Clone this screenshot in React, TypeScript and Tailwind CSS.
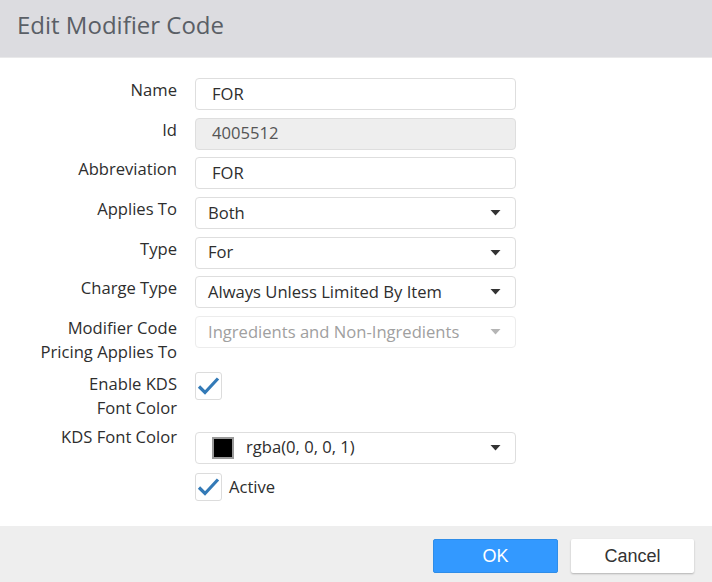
import React from "react";

const font = { fontFamily: '"Open Sans", "Noto Sans", sans-serif' };

function Arrow({ disabled }: { disabled?: boolean }) {
  return (
    <svg width="11" height="6" viewBox="0 0 11 6" className="shrink-0">
      <path d="M0.5 0 L10.5 0 L5.5 5.5 Z" fill={disabled ? "#b5b5b5" : "#333333"} />
    </svg>
  );
}

function Check() {
  return (
    <div className="w-[27px] h-[28px] border border-[#dcdcdc] rounded-[3px] bg-white flex items-center justify-center">
      <svg width="23" height="20" viewBox="0 0 23 20">
        <path d="M2 10.5 L8 16.5 L21 2.5" fill="none" stroke="#337ab7" strokeWidth="3.2" strokeLinecap="butt" />
      </svg>
    </div>
  );
}

function Label({ children }: { children: React.ReactNode }) {
  return (
    <div className="w-[177px] shrink-0 text-right text-[16.6px] leading-[24px] text-[#2e2e2e]">{children}</div>
  );
}

function TextInput({ value, disabled }: { value: string; disabled?: boolean }) {
  return (
    <div
      className={`w-[321px] h-[32px] rounded-[4px] border border-[#dedede] flex items-center pl-[16px] text-[16.6px] ${
        disabled ? "bg-[#eeeeee] text-[#555555]" : "bg-white text-[#2e2e2e]"
      }`}
    >
      {value}
    </div>
  );
}

function Select({ value, disabled, swatch }: { value: string; disabled?: boolean; swatch?: boolean }) {
  return (
    <div
      className={`w-[321px] h-[32px] rounded-[4px] border flex items-center pr-[14px] text-[16.6px] bg-white ${
        disabled ? "border-[#ececec] text-[#a0a0a0]" : "border-[#dedede] text-[#2e2e2e]"
      } ${swatch ? "pl-[16px]" : "pl-[12px]"}`}
    >
      {swatch && <div className="w-[22px] h-[22px] bg-black border-2 border-[#9a9a9a] mr-[12px] shrink-0" />}
      <span className="flex-1">{value}</span>
      <Arrow disabled={disabled} />
    </div>
  );
}

export default function App() {
  return (
    <div className="w-[712px] h-[582px] flex flex-col bg-white overflow-hidden" style={font}>
      <div className="h-[58px] shrink-0 bg-[#dcdce0] border-b border-[#e9e9ea] flex items-center pl-[17px] pb-[8px]">
        <h1 className="text-[24px] text-[#5a5f66] font-normal">Edit Modifier Code</h1>
      </div>
      <div className="flex-1 flex flex-col pt-[20px] gap-[7.7px]">
        <div className="flex gap-[18px]">
          <Label>Name</Label>
          <TextInput value="FOR" />
        </div>
        <div className="flex gap-[18px]">
          <Label>Id</Label>
          <TextInput value="4005512" disabled />
        </div>
        <div className="flex gap-[18px]">
          <Label>Abbreviation</Label>
          <TextInput value="FOR" />
        </div>
        <div className="flex gap-[18px]">
          <Label>Applies To</Label>
          <Select value="Both" />
        </div>
        <div className="flex gap-[18px]">
          <Label>Type</Label>
          <Select value="For" />
        </div>
        <div className="flex gap-[18px]">
          <Label>Charge Type</Label>
          <Select value="Always Unless Limited By Item" />
        </div>
        <div className="flex gap-[18px]">
          <Label>
            Modifier Code
            <br />
            Pricing Applies To
          </Label>
          <Select value="Ingredients and Non-Ingredients" disabled />
        </div>
        <div className="flex gap-[18px]">
          <Label>
            Enable KDS
            <br />
            Font Color
          </Label>
          <Check />
        </div>
        <div className="flex gap-[18px] -mt-[3px]">
          <Label>KDS Font Color</Label>
          <div className="mt-[7px]">
            <Select value="rgba(0, 0, 0, 1)" swatch />
          </div>
        </div>
        <div className="flex gap-[18px] mt-[2px]">
          <div className="w-[177px] shrink-0" />
          <div className="flex items-center gap-[7px]">
            <Check />
            <span className="text-[16.6px] text-[#2e2e2e]">Active</span>
          </div>
        </div>
      </div>
      <div
        className="h-[56px] shrink-0 bg-[#eeeeee] flex items-start justify-end pt-[13px] pr-[18px] gap-[13px]"
        style={{ fontFamily: '"Liberation Sans", Arial, sans-serif' }}
      >
        <button className="w-[125px] h-[34px] bg-[#3399ff] border border-[#2f8de8] rounded-[2px] text-white text-[18px]">
          OK
        </button>
        <button className="w-[123px] h-[34px] bg-white rounded-[2px] text-[#333333] text-[18px] shadow-[0_1px_2px_rgba(0,0,0,0.25)]">
          Cancel
        </button>
      </div>
    </div>
  );
}
